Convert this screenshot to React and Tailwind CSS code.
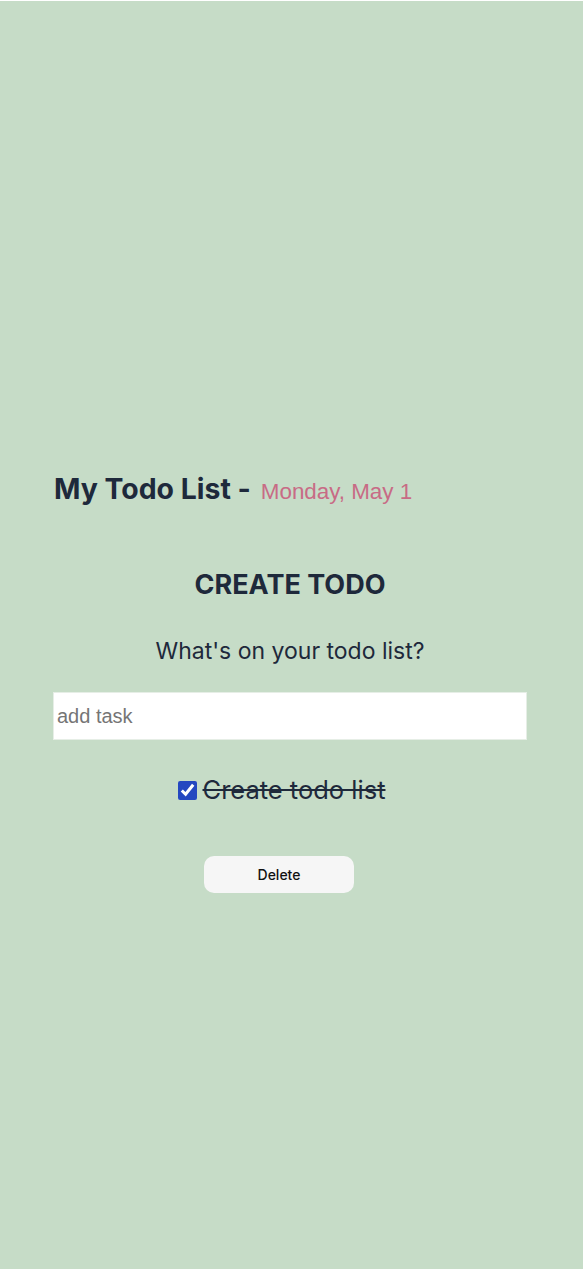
import React, { useState } from 'react';

const App = () => {
  const [done, setDone] = useState(true);
  const [task, setTask] = useState('');

  return (
    <div className="min-h-[1274px] bg-white">
      <div className="h-[1268px] w-[583px] mt-px bg-[#c6dcc7] font-['Inter',sans-serif] text-[#1e293b]">
        <div className="ml-[53px] w-[474px] pt-[468px]">
          <h1 className="flex items-baseline gap-[10px] pl-px text-[28.4px] font-bold leading-[40px]">
            My Todo List -
            <span className="font-['Liberation_Sans',Arial,sans-serif] text-[22.4px] font-normal text-[#c86b85]">
              Monday, May 1
            </span>
          </h1>

          <h2 className="mt-[55px] text-center text-[27px] font-bold leading-[36px]">CREATE TODO</h2>
          <p className="mt-[33px] text-center text-[23px] leading-[30px]">What's on your todo list?</p>

          <input
            value={task}
            onChange={(e) => setTask(e.target.value)}
            placeholder="add task"
            className="mt-[26px] block h-[48px] w-full border border-[#e6eee6] bg-white px-[3px] font-['Liberation_Sans',Arial,sans-serif] text-[20px] text-[#333] placeholder:text-[#757575] outline-none"
          />

          <div className="mt-[34px] flex items-center justify-center gap-[6px] pr-[17px]">
            <input
              type="checkbox"
              checked={done}
              onChange={() => setDone(!done)}
              className="h-[19px] w-[19px] accent-[#2448c0]"
            />
            <span className={`text-[25.5px] leading-[32px] ${done ? 'line-through' : ''}`}>Create todo list</span>
          </div>

          <div className="mt-[50px] flex justify-center pr-[22px]">
            <button className="h-[37px] w-[150px] rounded-[10px] bg-[#f6f6f6] text-[14px] font-medium text-[#111]">
              Delete
            </button>
          </div>
        </div>
      </div>
    </div>
  );
};

export default App;
